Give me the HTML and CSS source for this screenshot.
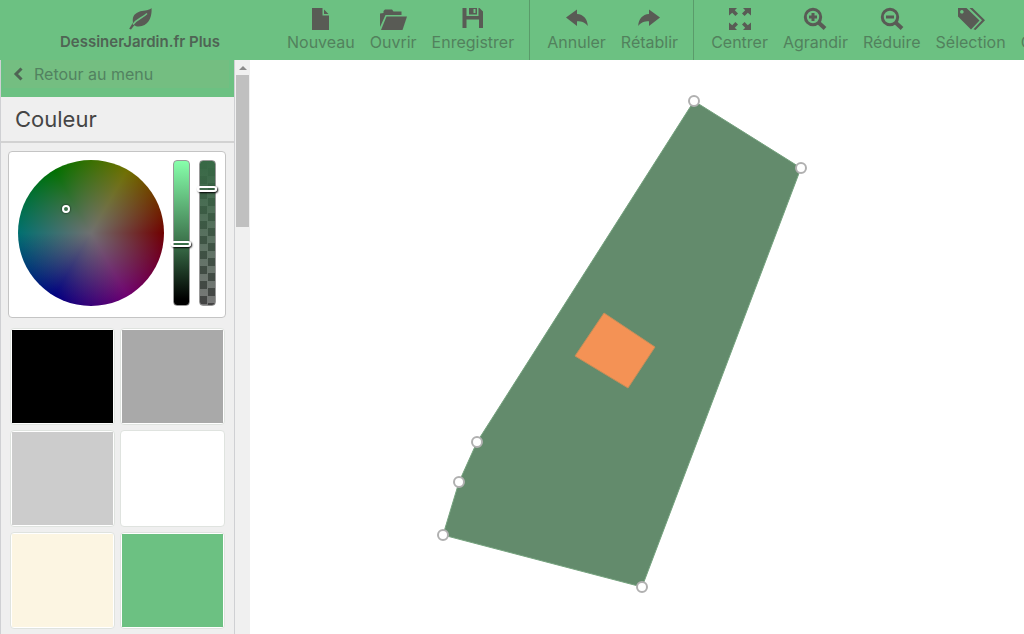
FILE: index.html
```html
<!DOCTYPE html>
<html lang="fr">
<head>
<meta charset="utf-8">
<meta name="viewport" content="width=device-width, initial-scale=1">
<title>DessinerJardin.fr Plus</title>
<link rel="stylesheet" href="styles.css">
</head>
<body>
<header class="topbar">
  <a class="brand" href="#">
    <svg class="icon" viewBox="0 0 24 24" aria-hidden="true"><path d="M23.5 1C24.3 9 21 19.5 10.500 19.600C8.800 19.600 7.500 19 6.300 18.300L3 22.500L1.200 21.800L5 15.500C3.500 8 9 4.800 14 4C19 3.200 21.500 3 23.500 1Z"/><path class="cut" d="M5 17.500C8.500 12 14 11.500 19 6.500"/></svg>
    <span>DessinerJardin.fr Plus</span>
  </a>
  <nav class="tools" aria-label="Outils">
    <div class="group">
      <button class="tool" type="button"><svg class="icon" viewBox="0 0 24 24" aria-hidden="true"><path d="M3 1h10.500v7.500h6.500v14.500H3zM15 2.500l4.500 4.500h-4.500z"/></svg><span>Nouveau</span></button>
      <button class="tool" type="button"><svg class="icon wide" viewBox="0 0 28 24" aria-hidden="true"><path d="M1 20V6.500L4.500 6V4L6 2.500h7l1.500 2h8v3.500H6.500z"/><path d="M7.500 9.500H28L23.500 23H2z"/></svg><span>Ouvrir</span></button>
      <button class="tool" type="button"><svg class="icon" viewBox="0 0 24 24" aria-hidden="true"><path d="M1.500 1h4v8h12V1h1l3.500 3.500V21h-4v-8.500H5.500V21h-4z"/><path d="M8 1h8v6.500H8zM12.500 2v4h2V2z" fill-rule="evenodd"/></svg><span>Enregistrer</span></button>
    </div>
    <div class="group">
      <button class="tool" type="button"><svg class="icon" viewBox="0 0 24 24" aria-hidden="true"><path d="M1 10.500L12 2.500V7C18.500 7.500 22.500 12 22.800 19C20 15.500 17 14.200 12 14.200V19z"/></svg><span>Annuler</span></button>
      <button class="tool" type="button"><svg class="icon" viewBox="0 0 24 24" aria-hidden="true"><path d="M23 10.500L12 2.500V7C5.500 7.500 1.500 12 1.200 19C4 15.500 7 14.200 12 14.200V19z"/></svg><span>Rétablir</span></button>
    </div>
    <div class="group">
      <button class="tool" type="button"><svg class="icon" viewBox="0 0 24 24" aria-hidden="true"><path d="M1 1h8L6.800 3.200L10 6.400L7.400 9L4.200 5.800L1 8.500zM23 1h-8L17.200 3.200L14 6.400L16.600 9L19.800 5.800L23 8.500zM1 23h8L6.800 20.800L10 17.600L7.400 15L4.200 18.200L1 15.500zM23 23h-8L17.200 20.800L14 17.600L16.600 15L19.800 18.200L23 15.500z"/></svg><span>Centrer</span></button>
      <button class="tool" type="button"><svg class="icon" viewBox="0 0 24 24" aria-hidden="true"><circle class="line" cx="10" cy="10" r="7.700"/><path class="handle" d="M15.500 15.500L22 21.500"/><path d="M8.500 6h3v2.500H14v3h-2.500V14h-3v-2.500H6v-3h2.500z"/></svg><span>Agrandir</span></button>
      <button class="tool" type="button"><svg class="icon" viewBox="0 0 24 24" aria-hidden="true"><circle class="line" cx="10" cy="10" r="7.700"/><path class="handle" d="M15.500 15.500L22 21.500"/><path d="M6 8.500h8v3H6z"/></svg><span>Réduire</span></button>
      <button class="tool" type="button"><svg class="icon wide" viewBox="0 0 28 24" aria-hidden="true"><path fill-rule="evenodd" d="M1 1h8.500L22.500 13.500L14 22.500L1 9.500zM4.800 3a1.800 1.800 0 1 0 .1 0z"/><path d="M12.500 1h3L28 13.200L18.500 23l-2-.8L25 13.300z"/></svg><span>Sélection</span></button>
      <button class="tool" type="button"><svg class="icon" viewBox="0 0 24 24" aria-hidden="true"><path d="M5 1h17v17H5zM1 5h3v14h14v3H1z"/></svg><span>Copier</span></button>
    </div>
  </nav>
</header>
<div class="workspace">
  <aside class="sidebar">
    <div class="panel">
      <div class="back-row">
        <button class="back" type="button"><svg class="chevron" viewBox="0 0 12 14" aria-hidden="true"><path d="M9.500 1.500L4 7l5.500 5.500"/></svg><span>Retour au menu</span></button>
      </div>
      <h1 class="title">Couleur</h1>
      <div class="picker">
        <div class="wheel"><span class="marker"></span></div>
        <input class="slider light" type="range" min="0" max="100" value="42" aria-label="Luminosité">
        <input class="slider alpha" type="range" min="0" max="100" value="82" aria-label="Opacité">
      </div>
      <div class="swatches">
        <button class="swatch black" type="button" aria-label="Noir"></button>
        <button class="swatch gray" type="button" aria-label="Gris"></button>
        <button class="swatch silver" type="button" aria-label="Gris clair"></button>
        <button class="swatch white" type="button" aria-label="Blanc"></button>
        <button class="swatch cream" type="button" aria-label="Crème"></button>
        <button class="swatch green" type="button" aria-label="Vert"></button>
      </div>
    </div>
    <div class="scrollbar" aria-hidden="true"><span class="arrow"></span><span class="thumb"></span></div>
  </aside>
  <main class="canvas">
    <svg class="drawing" viewBox="250 60 774 574" preserveAspectRatio="xMinYMin meet" role="img" aria-label="Plan du jardin">
      <polygon class="plot" points="694,101 801,168 642,587 443,535 459,482 477,442"/>
      <polygon class="house" points="604,313 655,347 628,388 575,356"/>
      <g class="nodes">
        <circle cx="694" cy="101" r="5"/><circle cx="801" cy="168" r="5"/><circle cx="642" cy="587" r="5"/>
        <circle cx="443" cy="535" r="5"/><circle cx="459" cy="482" r="5"/><circle cx="477" cy="442" r="5"/>
      </g>
    </svg>
  </main>
</div>
</body>
</html>
```
FILE: styles.css
```css
* { box-sizing: border-box; }

body {
  margin: 0;
  height: 100vh;
  display: flex;
  flex-direction: column;
  overflow: hidden;
  background: #fff;
  color: #5b6059;
  font-family: Inter, "Open Sans", sans-serif;
  font-size: 16px;
}

button {
  border: 0;
  padding: 0;
  background: none;
  color: inherit;
  font: inherit;
  cursor: pointer;
}

.topbar {
  display: flex;
  flex: none;
  height: 60px;
  overflow: hidden;
  background: #6cc182;
}

.brand,
.tool {
  display: flex;
  flex-direction: column;
  align-items: center;
  padding-top: 7px;
  line-height: 22px;
  white-space: nowrap;
}

.brand {
  flex: none;
  width: 280px;
  color: #4f6454;
  font-size: 15px;
  font-weight: 600;
  text-decoration: none;
}

.tool { color: #52815d; }

.icon {
  width: 24px;
  height: 24px;
  fill: #595b55;
}

.icon.wide { width: 28px; }
.cut { fill: none; stroke: #6cc182; stroke-width: 1.5; }
.line { fill: none; stroke: #595b55; stroke-width: 3; }
.handle { fill: none; stroke: #595b55; stroke-width: 4; }

.tools { display: flex; flex: none; padding-left: 7px; }
.group { display: flex; gap: 15px; padding-right: 15px; }
.group + .group { border-left: 1px solid #5a9b6a; padding-left: 17px; }

.workspace { display: flex; flex: 1; min-height: 0; }

.sidebar {
  display: flex;
  flex: none;
  width: 250px;
  background: #efefef;
}

.panel {
  flex: 1;
  overflow: hidden;
  border: solid #cfd0d3;
  border-width: 0 1px;
}

.back-row {
  height: 37px;
  padding: 0 5px 9px 3px;
  background: #6cc182;
}

.back {
  display: flex;
  align-items: center;
  gap: 10px;
  width: 100%;
  height: 28px;
  padding: 0 8px;
  background: #74be81;
  color: #528260;
}

.chevron {
  width: 12px;
  height: 14px;
  fill: none;
  stroke: #4f6454;
  stroke-width: 3;
}

.title {
  margin: 0;
  padding: 0 14px;
  border-bottom: 2px solid #d2d2d2;
  color: #454545;
  font-size: 22px;
  font-weight: 400;
  line-height: 44px;
}

.picker {
  display: flex;
  align-items: flex-start;
  gap: 9px;
  margin: 8px 8px 10px 7px;
  padding: 8px 9px 11px;
  border: 1px solid #c4c4c4;
  border-radius: 4px;
  background: #fff;
}

.wheel {
  position: relative;
  flex: none;
  width: 146px;
  height: 146px;
  border-radius: 50%;
  background:
    radial-gradient(closest-side, #707070, #70707000),
    conic-gradient(from 90deg, #700000, #700070, #000080, #007070, #007000, #707000, #700000);
}

.marker {
  position: absolute;
  left: 30%;
  top: 31%;
  width: 8px;
  height: 8px;
  border: 2px solid #fff;
  border-radius: 50%;
  box-shadow: 0 0 2px #000;
}

.slider {
  appearance: none;
  writing-mode: vertical-lr;
  direction: rtl;
  width: 17px;
  height: 146px;
  margin: 0;
  border: 1px solid #999;
  border-radius: 4px;
}

.light { background: linear-gradient(#87ffab, #376945 60%, #000 96%); }

.alpha {
  background:
    linear-gradient(#376945, #37694500),
    repeating-conic-gradient(#787878 0 25%, #444 0 50%) 0 0 / 15px 15px;
}

.slider::-webkit-slider-thumb {
  appearance: none;
  width: 20px;
  height: 6px;
  margin-left: -2px;
  border: 2px solid #fff;
  border-radius: 3px;
  box-shadow: 1px 1px 2px #000;
}

.swatches {
  display: grid;
  grid-template-columns: 1fr 1fr;
  gap: 5px;
  padding: 0 9px 8px;
}

.swatch {
  height: 97px;
  padding: 1px;
  border: 1px solid #dfe3df;
  border-radius: 4px;
  background: #fff;
}

.swatch::before { content: ""; display: block; height: 100%; background: currentColor; }
.black { color: #000; }
.gray { color: #a9a9a9; }
.silver { color: #ccc; }
.white { color: #fff; }
.cream { color: #fcf5e2; }
.green { color: #6cc182; }

.scrollbar {
  display: flex;
  flex-direction: column;
  align-items: center;
  width: 15px;
  background: #f0f0f0;
}

.arrow {
  margin: 6px 0 5px;
  border: solid transparent;
  border-width: 0 4px 4px;
  border-bottom-color: #8b8b8b;
}

.thumb { width: 13px; height: 152px; background: #c0c0c0; }

.canvas { flex: 1; min-width: 0; }
.drawing { display: block; width: 100%; height: 100%; }
.plot { fill: #638b6c; stroke: #75a27e; }
.house { fill: #f49255; stroke: #c48e59; }
.nodes { fill: #fff; stroke: #b0b0b0; stroke-width: 2; }
```
